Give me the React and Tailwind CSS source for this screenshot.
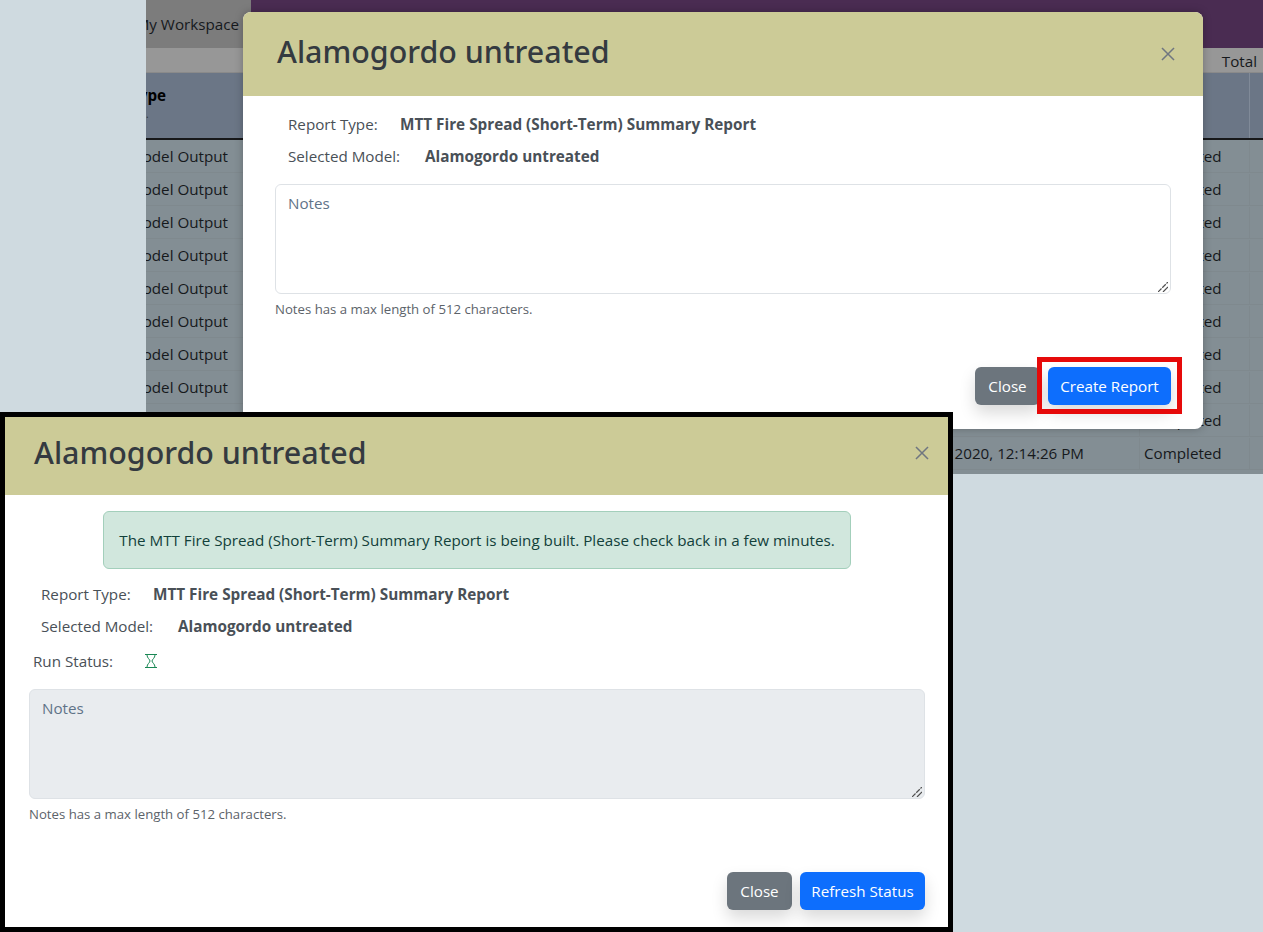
import React from "react";

function CloseX({ className }) {
  return (
    <svg viewBox="0 0 16 16" className={className} fill="none" stroke="#6f7680" strokeWidth="1.5" strokeLinecap="square">
      <path d="M2.5 2.5 L13.5 13.5 M13.5 2.5 L2.5 13.5" />
    </svg>
  );
}

function Hourglass() {
  return (
    <svg viewBox="0 0 12 14" className="w-3 h-[14px]" fill="none" stroke="#198754" strokeWidth="1">
      <path d="M0 .5 H12 M0 13.5 H12" />
      <path d="M2 1 C2 4 5 5.5 5 7 C5 8.5 2 10 2 13 M10 1 C10 4 7 5.5 7 7 C7 8.5 10 10 10 13" />
    </svg>
  );
}

function Grip() {
  return (
    <svg viewBox="0 0 10 10" className="absolute right-[3px] bottom-[2px] w-[10px] h-[10px]" fill="none" stroke="#4f4f4f" strokeWidth="1.2">
      <path d="M0 10 L10 0" strokeDasharray="5 1" />
      <path d="M5 10 L10 5" />
    </svg>
  );
}

function InfoRow({ label, value, gap, className }) {
  return (
    <div className={"flex items-center h-6 text-[#495057] text-[15.2px] " + className}>
      <span className={gap}>{label}</span>
      <span className="font-bold text-[15.3px]">{value}</span>
    </div>
  );
}

function Notes({ disabled }) {
  return (
    <>
      <div className="relative w-[896px] h-[110px]">
        <textarea
          disabled={disabled}
          placeholder="Notes"
          className={
            "block w-full h-full resize-none rounded-md border border-[#dee2e6] px-3 py-[7px] text-[15.2px] placeholder:text-[#5f7388] outline-none " +
            (disabled ? "bg-[#e9ecef]" : "bg-white")
          }
        />
        <Grip />
      </div>
      <div className="mt-[7px] text-[13.2px] leading-[16px] text-[#5c636a]">Notes has a max length of 512 characters.</div>
    </>
  );
}

function Buttons({ primary, primaryW }) {
  return (
    <div className="flex justify-end gap-2 text-[15.2px] text-white">
      <button className="w-[65px] h-[38px] pt-px rounded-md bg-[#6c757d] shadow-[0_8px_16px_rgba(0,0,0,0.15)]">Close</button>
      <button className={"h-[38px] pt-px rounded-md bg-[#0d6efd] shadow-[0_8px_16px_rgba(0,0,0,0.15)] " + primaryW}>{primary}</button>
    </div>
  );
}

function Header({ h, pl, pr, pb, closeClass }) {
  return (
    <div className={"flex items-center justify-between bg-[#cccb97] " + h + " " + pl + " " + pr}>
      <h2
        className={"text-[30.4px] text-[#343a40] leading-none " + pb}
        style={{ fontFamily: '"Noto Sans", sans-serif', fontWeight: 500 }}
      >
        Alamogordo untreated
      </h2>
      <CloseX className={"w-4 h-4 " + closeClass} />
    </div>
  );
}

const rows = [0, 1, 2, 3, 4, 5, 6, 7, 8, 9];

export default function App() {
  return (
    <div
      className="relative w-[1263px] h-[932px] overflow-hidden bg-[#cfdae0] text-[15.2px]"
      style={{ fontFamily: '"Open Sans", "Noto Sans", sans-serif' }}
    >
      {/* dimmed page behind the dialogs */}
      <div className="ml-[146px] h-[474px] flex flex-col overflow-hidden text-[#16191c]">
        <div className="flex h-12 shrink-0">
          <div className="w-[105px] bg-[#7c7c7c] flex items-center justify-end pr-3 pt-px whitespace-nowrap overflow-hidden">
            My Workspace
          </div>
          <div className="flex-1 bg-[#4a2c52]" />
        </div>
        <div className="h-[25px] shrink-0 bg-[#979797] border-b border-[#8a8a8a] flex items-center justify-end pr-[6px] pt-[3px]">Total</div>
        <div className="h-[67px] shrink-0 flex bg-[#6b7686] border-b-2 border-[#17181a]">
          <div className="flex-1 -ml-4 pt-[11px] text-black whitespace-nowrap overflow-hidden">
            <div className="font-bold leading-[22px]">Type</div>
            <div className="pl-4 text-[10px] leading-[12px] text-[#2d3238] mt-[2px]">.</div>
          </div>
          <div className="w-[14px] border-l border-[#808a98]" />
        </div>
        <div className="flex-1 flex flex-col bg-[#838e94]">
          {rows.map((r) => (
            <div key={r} className="h-[33px] flex items-center pt-px border-b border-[#7f898e] whitespace-nowrap">
              <div className="w-[82px] shrink-0 flex justify-end overflow-hidden">Model Output</div>
              <div className="w-[911px] shrink-0 flex justify-end pr-[55px]">{r === 9 ? "2020, 12:14:26 PM" : ""}</div>
              <div className="w-[110px] shrink-0 pl-1 border-l border-[#7f898e] h-full flex items-center">Completed</div>
              <div className="flex-1 h-full border-l border-[#7f898e]" />
            </div>
          ))}
        </div>
      </div>

      {/* first dialog */}
      <div className="absolute left-[243px] top-3 w-[960px] h-[417px] rounded-lg bg-white overflow-hidden shadow-[0_0_8px_rgba(0,0,0,0.25)]">
        <Header h="h-[84px]" pl="pl-[34px]" pr="pr-[27px]" pb="pb-1" closeClass="" />
        <div className="pl-8 pr-8 pt-4">
          <InfoRow label="Report Type:" gap="w-[112px] shrink-0" value="MTT Fire Spread (Short-Term) Summary Report" className="ml-[13px]" />
          <InfoRow label="Selected Model:" gap="w-[137px] shrink-0" value="Alamogordo untreated" className="ml-[13px] mt-2" />
          <div className="mt-4">
            <Notes />
          </div>
          <div className="mt-[50px]">
            <Buttons primary="Create Report" primaryW="w-[123px]" />
          </div>
        </div>
      </div>
      <div className="absolute left-[1037px] top-[357px] w-[145px] h-[57px] border-[5px] border-[#e60a0a]" />

      {/* second dialog */}
      <div className="absolute left-0 top-[412px] w-[953px] h-[520px] border-[5px] border-black bg-white">
        <Header h="h-[78px]" pl="pl-[29px]" pr="pr-[18px]" pb="pb-[6px]" closeClass="mb-[6px]" />
        <div className="pl-6 pr-[23px] pt-4">
          <div className="ml-[74px] w-[748px] h-[58px] pt-px flex items-center justify-center rounded-md border border-[#a3cfbb] bg-[#d1e7dd] text-[#12403a]">
            The MTT Fire Spread (Short-Term) Summary Report is being built. Please check back in a few minutes.
          </div>
          <InfoRow label="Report Type:" gap="w-[112px] shrink-0" value="MTT Fire Spread (Short-Term) Summary Report" className="ml-3 mt-[13px]" />
          <InfoRow label="Selected Model:" gap="w-[137px] shrink-0" value="Alamogordo untreated" className="ml-3 mt-2" />
          <div className="flex items-center h-6 ml-1 mt-[11px] text-[#495057]">
            <span className="w-[112px] shrink-0">Run Status:</span>
            <Hourglass />
          </div>
          <div className="mt-4">
            <Notes disabled />
          </div>
          <div className="mt-[50px]">
            <Buttons primary="Refresh Status" primaryW="w-[125px]" />
          </div>
        </div>
      </div>
    </div>
  );
}
